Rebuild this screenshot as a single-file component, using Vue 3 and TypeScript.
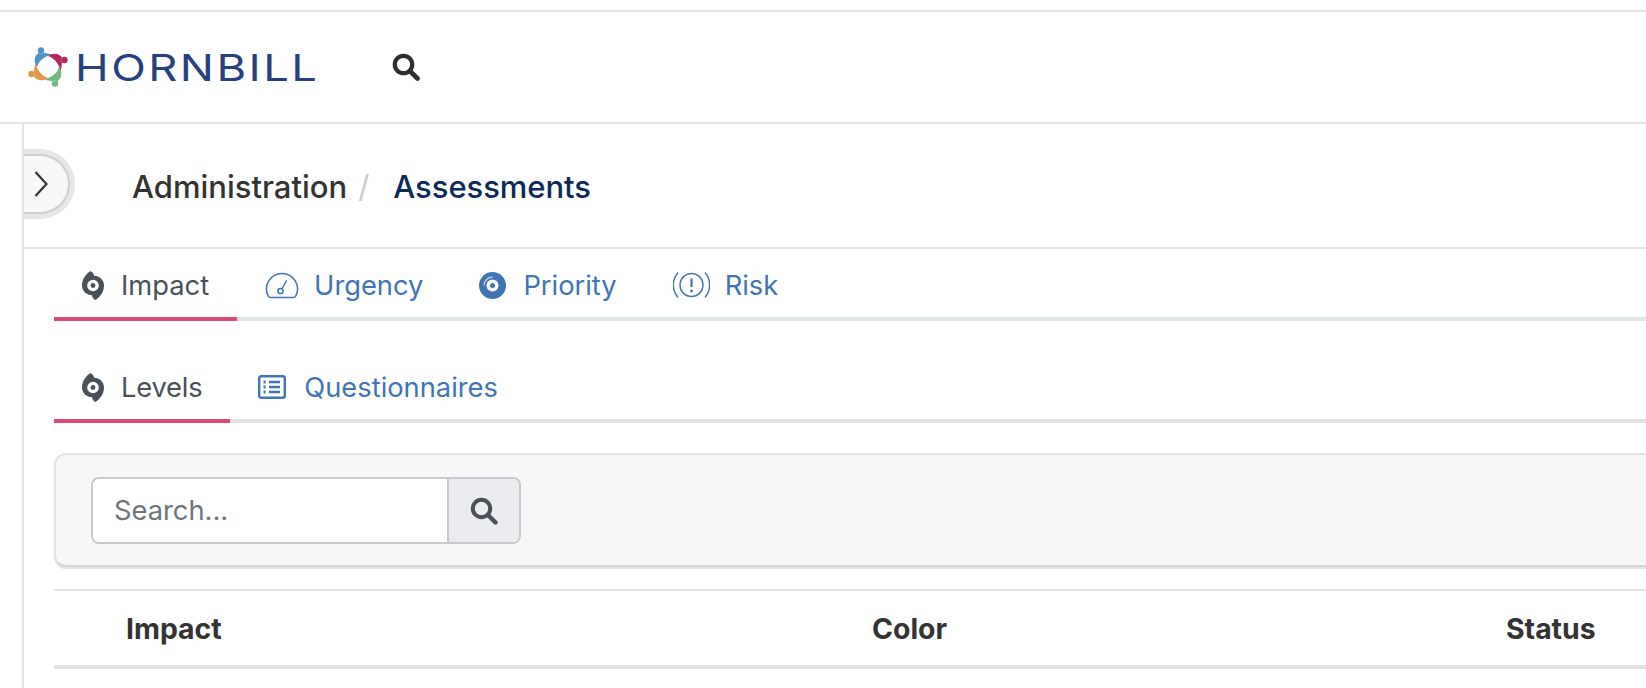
<script setup lang="ts">
const rotations = [
  { deg: 0, color: "#4f93cc" },
  { deg: 90, color: "#b8295a" },
  { deg: 180, color: "#74b982" },
  { deg: 270, color: "#e5964a" },
];
const hurricane =
  "M8.500 0C4 3 0 8 0 14.500 0 20 4.500 24.200 10 24.200 10 26 11.500 28 13.500 29 18 26 22 21 22 14.500 22 9 17.500 4.800 12 4.800 12 3 10.500 1 8.500 0ZM11 8.700a5.800 5.800 0 1 1 0 11.600 5.800 5.800 0 0 1 0-11.600Z";
</script>

<template>
  <div class="page">
    <header class="topbar">
      <div class="logo">
        <svg class="logo-mark" viewBox="-23 -23 46 46" width="46" height="46">
          <g v-for="r in rotations" :key="r.deg" :transform="`rotate(${r.deg})`" :fill="r.color">
            <circle cx="-7" cy="-16.500" r="3.200" />
            <path d="M-11 0C-14.500-5-14-11-9.500-14c1.500.8 3.500.8 5 0 3 .2 6 .6 9 1.500C-1-11.500-8-8.500-11 0Z" />
          </g>
        </svg>
        <span class="logo-text">HORNBILL</span>
      </div>
      <svg class="top-search" viewBox="0 0 28 28" width="28" height="28">
        <circle cx="11.500" cy="11.500" r="8.700" fill="none" stroke="#2f2f2f" stroke-width="4.200" />
        <path d="M18 18l7.500 7.500" stroke="#2f2f2f" stroke-width="4.600" stroke-linecap="round" />
      </svg>
    </header>

    <main class="content">
      <div class="collapse-btn">
        <svg viewBox="0 0 16 28" width="16" height="28">
          <path d="M2.500 2l11 12-11 12" fill="none" stroke="#333" stroke-width="2.200" />
        </svg>
      </div>

      <nav class="crumbs">
        <span class="crumb">Administration</span>
        <span class="crumb-sep">/</span>
        <span class="crumb-active">Assessments</span>
      </nav>

      <div class="section">
        <div class="tabs tabs-main">
          <div class="tab active">
            <svg viewBox="0 0 22 29" width="22" height="29">
              <path fill-rule="evenodd" fill="#495057" :d="hurricane" />
              <circle cx="11" cy="14.500" r="2.400" fill="#495057" />
            </svg>
            <span>Impact</span>
          </div>
          <div class="tab tight">
            <svg viewBox="0 0 34 28" width="34" height="28" fill="none" stroke="#3f74b5" stroke-width="1.500">
              <path d="M5.500 26.500h23c1 0 1.700-.5 2.200-1.300A15.500 15.500 0 1 0 3.300 25.200c.5.800 1.200 1.300 2.200 1.300Z" />
              <circle cx="15.500" cy="20" r="2.600" />
              <path d="M17 18l4.500-8.500" />
            </svg>
            <span>Urgency</span>
          </div>
          <div class="tab">
            <svg viewBox="0 0 27 27" width="27" height="27">
              <circle cx="13.500" cy="13.500" r="13.500" fill="#3f74b5" />
              <circle cx="13.500" cy="13.500" r="6" fill="#fff" />
              <circle cx="13.500" cy="13.500" r="2.500" fill="#3f74b5" />
              <path d="M5 13.500A8.500 8.500 0 0 1 13.500 5" fill="none" stroke="#fff" stroke-width="1.300" opacity=".7" />
            </svg>
            <span>Priority</span>
          </div>
          <div class="tab tight">
            <svg viewBox="0 0 37 28" width="37" height="28" fill="none" stroke="#3f74b5" stroke-width="1.500">
              <circle cx="18.500" cy="14" r="11.500" />
              <path d="M5 1.500a19 19 0 0 0 0 25M32 1.500a19 19 0 0 1 0 25" />
              <path d="M18.500 7.500v8.500" stroke-width="2.200" />
              <circle cx="18.500" cy="20" r="1.400" fill="#3f74b5" stroke="none" />
            </svg>
            <span>Risk</span>
          </div>
        </div>

        <div class="tabs tabs-sub">
          <div class="tab active">
            <svg viewBox="0 0 22 29" width="22" height="29">
              <path fill-rule="evenodd" fill="#495057" :d="hurricane" />
              <circle cx="11" cy="14.500" r="2.400" fill="#495057" />
            </svg>
            <span class="levels">Levels</span>
          </div>
          <div class="tab wide">
            <svg viewBox="0 0 28 24" width="28" height="24" fill="none" stroke="#3f74b5" stroke-width="2.400">
              <rect x="1.200" y="1.200" width="25.600" height="21.600" rx="2" />
              <path d="M11 7h11M11 12h11M11 17h11" />
              <path d="M5.500 7h2M5.500 12h2M5.500 17h2" stroke-width="2.800" />
            </svg>
            <span>Questionnaires</span>
          </div>
        </div>

        <div class="toolbar">
          <div class="search">
            <input class="search-input" type="text" placeholder="Search..." />
            <button class="search-btn" type="button">
              <svg viewBox="0 0 28 28" width="28" height="28">
                <circle cx="11.500" cy="11.500" r="8.700" fill="none" stroke="#495057" stroke-width="4" />
                <path d="M18 18l7.500 7.500" stroke="#495057" stroke-width="4.400" stroke-linecap="round" />
              </svg>
            </button>
          </div>
        </div>

        <div class="table-head">
          <div>Impact</div>
          <div>Color</div>
          <div>Status</div>
        </div>
      </div>
    </main>
  </div>
</template>

<style>
html,
body {
  margin: 0;
  background: #fff;
  overflow: hidden;
}
</style>

<style scoped>
.page {
  width: 1646px;
  height: 688px;
  overflow: hidden;
  padding-top: 10px;
  box-sizing: border-box;
  font-family: Inter, "Liberation Sans", sans-serif;
  color: #333;
}
.topbar {
  height: 114px;
  box-sizing: border-box;
  border-top: 2px solid #e2e4e8;
  border-bottom: 2px solid #e2e4e8;
  display: flex;
  align-items: center;
  padding-left: 25px;
}
.logo {
  display: flex;
  align-items: center;
  width: 367px;
}
.logo-mark {
  flex: none;
}
.logo-text {
  margin-left: 4px;
  font-size: 37px;
  line-height: 1;
  letter-spacing: 2px;
  color: #27417f;
  transform: scaleX(1.225);
  transform-origin: left center;
}
.content {
  position: relative;
  margin-left: 22px;
  height: 564px;
  border-left: 2px solid #e2e4e8;
}
.collapse-btn {
  position: absolute;
  left: 0;
  top: 30px;
  width: 46px;
  height: 60px;
  box-sizing: border-box;
  display: flex;
  align-items: center;
  padding-left: 9px;
  background: #f7f8fa;
  border: 2px solid #cfcfcf;
  border-left: none;
  border-radius: 0 30px 30px 0;
  box-shadow: 0 0 0 5px #e6e6e6;
  clip-path: inset(-6px -6px -6px 0);
}
.crumbs {
  height: 125px;
  box-sizing: border-box;
  border-bottom: 2px solid #e2e4e8;
  display: flex;
  align-items: center;
  padding: 1px 0 0 108px;
  font-size: 31px;
  font-weight: 500;
}
.crumb-sep {
  color: #ccc;
  font-weight: 400;
  margin: 0 24px 0 11px;
}
.crumb-active {
  color: #0c2a57;
  letter-spacing: -0.05px;
}
.section {
  padding-left: 30px;
}
.tabs {
  display: flex;
  border-bottom: 4px solid #dfe2e7;
}
.tabs-main {
  height: 72px;
  box-sizing: border-box;
}
.tabs-sub {
  height: 102px;
  box-sizing: border-box;
  padding-top: 30px;
}
.tab {
  display: flex;
  align-items: center;
  gap: 17px;
  padding: 4px 28px 0;
  margin-bottom: -4px;
  font-size: 27.3px;
  color: #3f74b5;
  border-bottom: 4px solid transparent;
}
.tab.tight {
  gap: 15px;
}
.tab.wide {
  gap: 18px;
}
.levels {
  letter-spacing: -0.2px;
}
.tab.active {
  color: #495057;
  border-bottom-color: #dc4a78;
}
.toolbar {
  margin-top: 30px;
  height: 114px;
  box-sizing: border-box;
  background: #f7f7f7;
  border: 2px solid #e2e4e8;
  border-right: none;
  border-bottom: 2px solid #d4d5d8;
  border-radius: 12px 0 0 12px;
  box-shadow: 0 2px 0 #e2e4e8;
  padding: 22px 0 0 35px;
}
.search {
  display: flex;
  width: 430px;
  height: 67px;
  box-sizing: border-box;
  border: 2px solid #c8c9cc;
  border-radius: 8px;
  overflow: hidden;
}
.search-input {
  flex: 1;
  min-width: 0;
  border: none;
  outline: none;
  padding: 0 21px;
  background: #fff;
  font-family: inherit;
  font-size: 27.3px;
  color: #333;
}
.search-input::placeholder {
  color: #6c757d;
  opacity: 1;
}
.search-btn {
  flex: none;
  width: 72px;
  padding: 0;
  border: none;
  border-left: 2px solid #c8c9cc;
  background: #e9ebee;
  display: flex;
  align-items: center;
  justify-content: center;
}
.table-head {
  margin-top: 22px;
  height: 80px;
  box-sizing: border-box;
  border-top: 2px solid #e2e4e8;
  border-bottom: 4px solid #dfe2e7;
  display: grid;
  grid-template-columns: 746px 634px 1fr;
  align-items: center;
  padding-left: 72px;
  font-size: 28.4px;
  font-weight: 700;
}
</style>
